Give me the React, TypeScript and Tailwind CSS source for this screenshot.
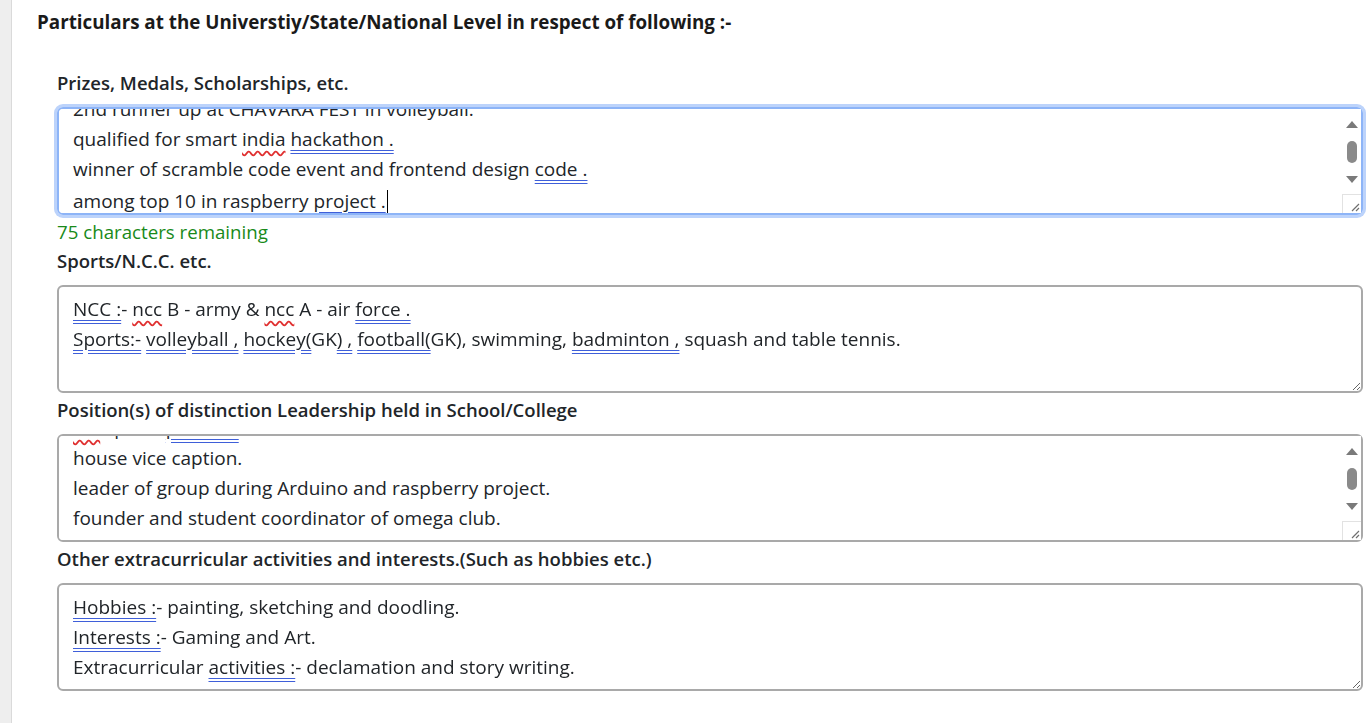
import React, { useEffect, useRef } from 'react';

const blue = 'underline decoration-double decoration-[#3f5fd9] underline-offset-[4px]';
const red = 'underline decoration-wavy decoration-[#e03030] underline-offset-[4px]';

// classic scrollbar look, drawn over the box's right edge
const FakeScrollbar: React.FC = () => (
  <div className="pointer-events-none absolute right-[2px] top-[2px] bottom-[2px] flex w-[19px] flex-col items-center bg-white">
    <div className="mt-[12px] h-0 w-0 border-x-[6px] border-b-[7px] border-x-transparent border-b-[#7a7a7a]" />
    <div className="mt-[13px] h-[22px] w-[10px] rounded-full bg-[#8a8a8a]" />
    <div className="mt-[13px] h-0 w-0 border-x-[6px] border-t-[7px] border-x-transparent border-t-[#7a7a7a]" />
    <div className="relative mt-auto h-[19px] w-full border-l border-t border-[#e2e2e2] bg-white">
      <svg className="absolute bottom-[1px] right-[1px]" width="10" height="10" viewBox="0 0 10 10">
        <path d="M9 2 L2 9 M9 6 L6 9" stroke="#6f6f6f" strokeWidth="1.2" />
      </svg>
    </div>
  </div>
);

const Field: React.FC<{
  label: string;
  focused?: boolean;
  scrollGap?: number;
  first?: boolean;
  children: React.ReactNode;
}> = ({ label, focused, scrollGap, first, children }) => {
  const boxRef = useRef<HTMLDivElement>(null);

  useEffect(() => {
    // scroll overflowing boxes near the bottom like the saved form
    const el = boxRef.current;
    if (el && scrollGap !== undefined) {
      el.scrollTop = el.scrollHeight - el.clientHeight - scrollGap;
    }
  }, [scrollGap]);

  return (
    <div>
      <label className={`block text-[18.5px] font-semibold leading-6 text-[#212529] ${first ? '' : 'mt-[5px]'}`}>
        {label}
      </label>
      <div className="relative mt-[12px]">
        <div
          ref={boxRef}
          className={`h-[108px] resize-y overflow-auto rounded-md border-2 bg-white px-[14px] py-[7px] text-[19px] leading-[30px] text-[#212529] ${
            focused ? 'border-[#8db4f7] shadow-[0_0_0_3px_#bcd3fb]' : 'border-[#a9a9a9]'
          }`}
        >
          {children}
        </div>
        {scrollGap !== undefined && <FakeScrollbar />}
      </div>
    </div>
  );
};

const App: React.FC = () => {
  return (
    <div className="flex min-h-screen bg-white" style={{ fontFamily: '"Segoe UI", "Open Sans", sans-serif' }}>
      <div className="w-[12px] shrink-0 border-r border-[#dadada] bg-[#eeeeee]" />
      <div className="flex-1 pl-[25px] pr-[8px] pt-[10px]">
        <h2 className="text-[18.8px] font-bold leading-6 text-[#1a1a1a]">
          Particulars at the Universtiy/State/National Level in respect of following :-
        </h2>

        <div className="mt-[37px] pl-[20px]">
          <Field label="Prizes, Medals, Scholarships, etc." focused scrollGap={10} first>
            <div>2nd runner up at CHAVARA FEST in volleyball.</div>
            <div>
              qualified for smart <span className={red}>india</span> <span className={blue}>hackathon .</span>
            </div>
            <div>
              winner of scramble code event and frontend design <span className={blue}>code .</span>
            </div>
            <div>
              among top 10 in raspberry <span className={blue}>project .</span>
              <span className="ml-px inline-block h-[24px] w-px translate-y-[6px] bg-black" />
            </div>
          </Field>
          <div className="mt-[5px] text-[18.7px] leading-6 text-[#198a1a]">75 characters remaining</div>

          <div className="mt-[2px]">
            <Field label="Sports/N.C.C. etc.">
              <div>
                <span className={blue}>NCC :</span>- <span className={red}>ncc</span> B - army &amp;{' '}
                <span className={red}>ncc</span> A - air <span className={blue}>force .</span>
              </div>
              <div>
                <span className={blue}>Sports:-</span> <span className={blue}>volleyball ,</span>{' '}
                <span className={blue}>hockey(</span>GK<span className={blue}>) ,</span>{' '}
                <span className={blue}>football(</span>GK), swimming, <span className={blue}>badminton ,</span> squash
                and table tennis.
              </div>
            </Field>
          </div>

          <Field label="Position(s) of distinction Leadership held in School/College" scrollGap={0}>
            <div>
              <span className={red}>ssc</span> sports <span className={blue}>prefect .</span>
            </div>
            <div>house vice caption.</div>
            <div>leader of group during Arduino and raspberry project.</div>
            <div>founder and student coordinator of omega club.</div>
          </Field>

          <Field label="Other extracurricular activities and interests.(Such as hobbies etc.)">
            <div>
              <span className={blue}>Hobbies :</span>- painting, sketching and doodling.
            </div>
            <div>
              <span className={blue}>Interests :</span>- Gaming and Art.
            </div>
            <div>
              Extracurricular <span className={blue}>activities :</span>- declamation and story writing.
            </div>
          </Field>
        </div>
      </div>
    </div>
  );
};

export default App;
